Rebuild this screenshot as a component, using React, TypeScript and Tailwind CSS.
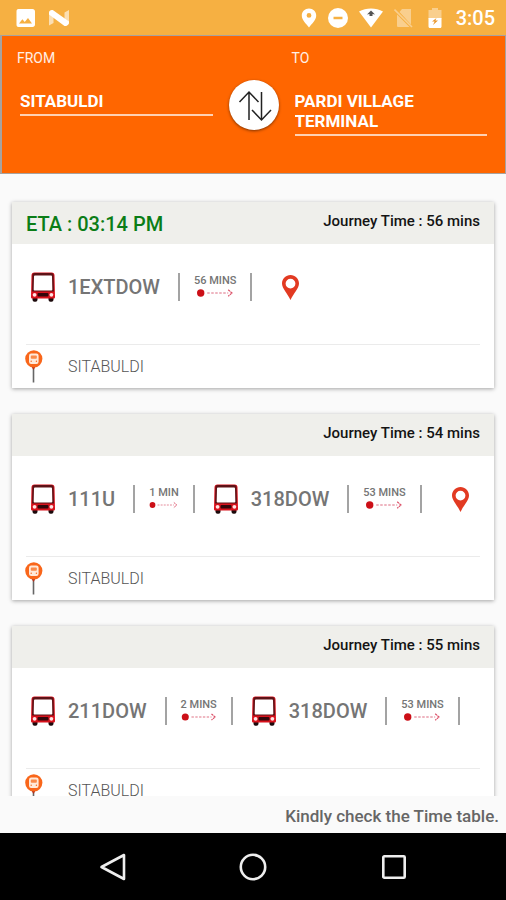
import React, { useState } from 'react';
import clsx from 'clsx';

interface Leg {
  route: string;
  duration: string;
}

interface Journey {
  id: number;
  eta?: string;
  total: string;
  legs: Leg[];
  stop: string;
}

const journeys: Journey[] = [
  {
    id: 1,
    eta: '03:14 PM',
    total: '56 mins',
    legs: [{ route: '1EXTDOW', duration: '56 MINS' }],
    stop: 'SITABULDI',
  },
  {
    id: 2,
    total: '54 mins',
    legs: [
      { route: '111U', duration: '1 MIN' },
      { route: '318DOW', duration: '53 MINS' },
    ],
    stop: 'SITABULDI',
  },
  {
    id: 3,
    total: '55 mins',
    legs: [
      { route: '211DOW', duration: '2 MINS' },
      { route: '318DOW', duration: '53 MINS' },
    ],
    stop: 'SITABULDI',
  },
];

/* Icons */

function BusIcon() {
  return (
    <svg viewBox="0 0 26 30" className="h-[30px] w-[26px] shrink-0" aria-hidden="true">
      <rect x="2.500" y="24" width="5" height="5.800" rx="2" fill="#1c0a0c" />
      <rect x="18.500" y="24" width="5" height="5.800" rx="2" fill="#1c0a0c" />
      <path d="M4.500.5h17c2 0 3 1.200 3 3L25 25c0 1-.6 1.600-1.500 1.600h-21C1.600 26.600 1 26 1 25L1.500 3.500c0-1.800 1-3 3-3z" fill="#d8121c" />
      <path d="M5 1h16c1.800 0 2.600.8 2.600 2.600L24 19.500H2l.4-15.900C2.400 1.800 3.200 1 5 1z" fill="#5f1216" />
      <path d="M5.200 3.400h15.600c.8 0 1.200.4 1.200 1.200l.3 12.800c0 .7-.4 1.100-1.200 1.100H4.900c-.8 0-1.200-.4-1.200-1.100L4 4.600c0-.8.400-1.200 1.200-1.200z" fill="#fff" />
      <rect x="7.500" y="21" width="11" height="3.600" rx="1" fill="#33060a" />
      <circle cx="4.600" cy="22.800" r="1.900" fill="#ffe3e3" />
      <circle cx="21.400" cy="22.800" r="1.900" fill="#ffe3e3" />
    </svg>
  );
}

function WalkArrow() {
  return (
    <svg viewBox="0 0 38 8" className="h-2 w-0 min-w-full" fill="none" aria-hidden="true">
      <circle cx="4.500" cy="4" r="3.700" fill="#cc0f17" />
      <path d="M11 4h21" stroke="#dd6b80" strokeWidth="1" strokeDasharray="2.500 1.500" />
      <path d="M32 .8 35.800 4 32 7.200" stroke="#dc5068" strokeWidth="1.200" strokeDasharray="2.200 .6" />
    </svg>
  );
}

function PinIcon() {
  return (
    <svg viewBox="0 0 17 25" className="h-[25px] w-[17px] shrink-0" aria-hidden="true">
      <path
        fillRule="evenodd"
        fill="#e23a22"
        d="M8.500 0C13.200 0 17 3.800 17 8.500c0 5-5.300 9.500-8.500 16.500C5.300 18 0 13.500 0 8.500 0 3.800 3.800 0 8.500 0zm0 3.700a4.900 4.900 0 1 0 0 9.800 4.900 4.900 0 0 0 0-9.800z"
      />
    </svg>
  );
}

function StopIcon() {
  return (
    <svg viewBox="0 0 18 33" className="h-[33px] w-[18px] shrink-0" aria-hidden="true">
      <path d="M8.500 17v15.500" stroke="#666" strokeWidth="1.600" />
      <path d="M5.500 15h6l-3 5z" fill="#b8321a" />
      <circle cx="8.800" cy="8.800" r="8.600" fill="#f9661a" />
      <rect x="4" y="3.500" width="9.600" height="10.500" rx="2.200" fill="#ffe9d9" />
      <rect x="5.800" y="5.600" width="6" height="3.200" rx=".8" fill="#f98a4a" />
      <circle cx="6.200" cy="11.200" r=".7" fill="#f9661a" />
      <circle cx="11.400" cy="11.200" r=".7" fill="#f9661a" />
    </svg>
  );
}

function StatusBar() {
  return (
    <header className="flex h-[35px] shrink-0 items-center bg-[#f6b042] pl-4 pr-[11px] text-white">
      <svg viewBox="0 0 20 20" className="mr-3 size-5" aria-hidden="true">
        <path
          fillRule="evenodd"
          fill="#fff"
          d="M2.500 1h14C18 1 19 2 19 3.500v13c0 1.500-1 2.500-2.500 2.500h-14C1 19 .5 18 .5 16.500v-13C.5 2 1 1 2.500 1zM3 15.500h13l-4-5.500-3.300 4-2.300-2.700z"
        />
      </svg>
      <svg viewBox="0 0 22 18" className="h-[18px] w-[22px]" aria-hidden="true">
        <path d="M1 2.500v14l4.500-2.500V6zM21 1v14.500L16.500 12V3.500z" fill="#fff" opacity=".6" />
        <path d="M1 3.500C1 1.500 3.500.5 5.500 1.500L21 12.500c.4 2.500-2 5-4.500 4.500L1 5.500z" fill="#fff" />
      </svg>

      <div className="ml-auto flex items-center gap-[11px]">
        <svg viewBox="0 0 16 20" className="h-5 w-4" aria-hidden="true">
          <path
            fillRule="evenodd"
            fill="#fff"
            d="M8 .5c4 0 7.200 3 7.200 7C15.200 12 11 15.500 8 19.500 5 15.500.8 12 .8 7.500c0-4 3.200-7 7.200-7zm0 4.500a2.400 2.400 0 1 0 0 4.800A2.400 2.400 0 0 0 8 5z"
          />
        </svg>
        <svg viewBox="0 0 20 20" className="size-5" aria-hidden="true">
          <circle cx="10" cy="10" r="10" fill="#fff" />
          <path d="M5.500 10h9" stroke="#f6b042" strokeWidth="2.500" />
        </svg>
        <svg viewBox="0 0 24 20" className="h-5 w-6" aria-hidden="true">
          <path d="M0 3.500C7 -.5 17 -.5 24 3.500L12 19.500z" fill="#fff" />
          <path d="m8 6.500 4-4 4 4-2.500-.5V8h-3V6z" fill="#555" />
        </svg>
        <svg viewBox="0 0 20 20" className="size-5 opacity-40" aria-hidden="true">
          <path d="M8 1h9v15.500L5.500 4zM3 6.500 15.500 19H4.500C3.500 19 3 18.500 3 17.500z" fill="#fff" />
          <path d="M.5 1.500 18 19" stroke="#fff" strokeWidth="1.600" />
        </svg>
        <svg viewBox="0 0 20 20" className="size-5" aria-hidden="true">
          <path d="M7 0h6v2h3.500v9h-13V2H7z" fill="#fff" opacity=".4" />
          <path d="M3.500 10h13v8.500c0 .8-.5 1.500-1.500 1.500H5c-1 0-1.500-.7-1.500-1.500z" fill="#fff" />
          <path d="m11.500 10-4.500 3.500h2.700L8 17l5-4.500h-2.700z" fill="#e9962a" />
        </svg>
        <time className="text-[20px] leading-6 font-medium">3:05</time>
      </div>
    </header>
  );
}

interface StationFieldProps {
  id: string;
  label: string;
  value: string;
  onChange: (value: string) => void;
}

function StationField({ id, label, value, onChange }: StationFieldProps) {
  return (
    <div className="min-w-0 flex-1">
      <label htmlFor={id} className="mb-[23px] block pl-px text-sm leading-5 text-white/90">
        {label}
      </label>
      <div className="mx-1 border-b-2 border-white/70 pb-[3px]">
        <textarea
          id={id}
          rows={1}
          value={value}
          onChange={(e) => onChange(e.target.value)}
          className="block field-sizing-content w-full resize-none overflow-hidden bg-transparent text-[17px] leading-5 font-bold text-white outline-none"
        />
      </div>
    </div>
  );
}

function JourneyCard({ journey }: { journey: Journey }) {
  return (
    <article className="shrink-0 bg-white shadow-[0_1px_4px_rgba(0,0,0,0.35)]">
      <div className="flex h-[42px] items-start justify-between bg-[#efefeb] px-[14px]">
        <p className="pt-[10px] text-[20px] leading-6 font-medium text-[#0b7d17]">
          {journey.eta && `ETA : ${journey.eta}`}
        </p>
        <p className="pt-[9px] text-[15px] leading-5 font-medium text-[#141414]">
          Journey Time : {journey.total}
        </p>
      </div>

      <div className="mx-[14px] flex h-[101px] items-start overflow-hidden border-b border-[#ebebeb] pt-7 pl-1">
        {journey.legs.map((leg, index) => (
          <div key={index} className={clsx('flex h-[30px] shrink-0 items-center', index > 0 && 'ml-[18px]')}>
            <BusIcon />
            <span className="ml-3 text-[20px] leading-6 font-medium text-[#757575]">{leg.route}</span>
            <div className="ml-[18px] flex h-7 items-start border-x-2 border-[#a3a3a3] px-[14px]">
              <div className="flex flex-col">
                <span className="text-[11px] leading-4 font-medium text-[#757575]">{leg.duration}</span>
                <WalkArrow />
              </div>
            </div>
          </div>
        ))}
        <button type="button" aria-label="Track on map" className="ml-[30px] flex h-[30px] shrink-0 items-center">
          <PinIcon />
        </button>
      </div>

      <div className="flex h-[43px] items-center pl-[13px]">
        <StopIcon />
        <span className="ml-[25px] text-base leading-6 font-light text-[#555]">{journey.stop}</span>
      </div>
    </article>
  );
}

export default function App() {
  const [from, setFrom] = useState('SITABULDI');
  const [to, setTo] = useState('PARDI VILLAGE TERMINAL');

  const swapStations = () => {
    setFrom(to);
    setTo(from);
  };

  return (
    <div className="flex h-screen flex-col bg-[#fafafa] font-['Roboto',sans-serif]">
      <StatusBar />

      {/* Route picker */}
      <section className="flex h-[139px] shrink-0 items-start gap-3 border border-l-2 border-[#a8a29e] bg-[#ff6600] px-[14px] pt-3">
        <StationField id="from" label="FROM" value={from} onChange={setFrom} />
        <button
          type="button"
          aria-label="Swap stations"
          onClick={swapStations}
          className="mt-8 size-[50px] shrink-0 rounded-full bg-white shadow-[0_1px_3px_rgba(0,0,0,0.5)]"
        >
          <svg viewBox="0 0 50 50" className="size-[50px]" fill="none" stroke="#222" strokeWidth="1.500" aria-hidden="true">
            <path d="M20 40V12M10.500 22 20 12l9.500 10" />
            <path d="M32.500 12v28M23 30l9.500 10L42 30" />
          </svg>
        </button>
        <StationField id="to" label="TO" value={to} onChange={setTo} />
      </section>

      {/* Results */}
      <main className="flex min-h-0 flex-1 flex-col gap-[26px] overflow-y-auto px-3 pt-7 [scrollbar-width:none]">
        {journeys.map((journey) => (
          <JourneyCard key={journey.id} journey={journey} />
        ))}
      </main>

      <p className="h-[37px] shrink-0 px-[7px] pt-2 text-right text-[17px] leading-6 font-medium text-[#666]">
        Kindly check the Time table.
      </p>

      <nav className="grid h-[67px] shrink-0 grid-cols-3 place-items-center bg-black px-[42px]">
        <button type="button" aria-label="Back">
          <svg viewBox="0 0 28 28" className="size-7" fill="none" stroke="#eee" strokeWidth="2.600" aria-hidden="true">
            <path d="M26 2v24L3.500 14z" strokeLinejoin="round" />
          </svg>
        </button>
        <button type="button" aria-label="Home">
          <svg viewBox="0 0 28 28" className="size-7" fill="none" stroke="#eee" strokeWidth="2.600" aria-hidden="true">
            <circle cx="14" cy="14" r="12.200" />
          </svg>
        </button>
        <button type="button" aria-label="Recent apps">
          <svg viewBox="0 0 28 28" className="size-7" fill="none" stroke="#eee" strokeWidth="2.600" aria-hidden="true">
            <rect x="3.300" y="3.300" width="21.400" height="21.400" rx="1" />
          </svg>
        </button>
      </nav>
    </div>
  );
}
